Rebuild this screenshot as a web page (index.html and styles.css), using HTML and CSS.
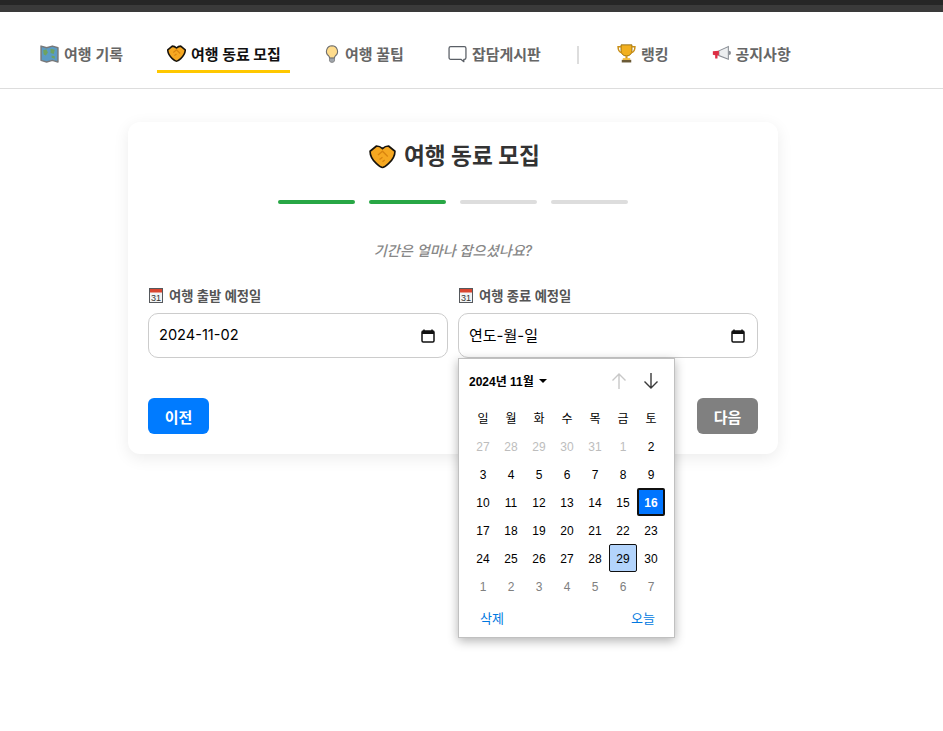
FILE: index.html
```html
<!DOCTYPE html>
<html lang="ko">
<head>
<meta charset="utf-8">
<title>여행 동료 모집</title>
<link rel="stylesheet" href="styles.css">
</head>
<body>
<div class="topbar"><div class="topbar-dark"></div><div class="topbar-light"></div></div>
<nav class="nav">
  <a class="tab">
    <svg class="ico" viewBox="0 0 18 18"><path d="M1 2l5.300 1.500L11.700 2 17 3.500V17l-5.300-1.500L6.300 17 1 15.500z" fill="#5b9bc4" stroke="#77787a" stroke-width="1.400" stroke-linejoin="round"/><path d="M3 6l3-1 1.500 3-2 3-2-1zM10 4.500l4 1-1 4-3-1zM11 11l3 .5v2.500l-3-1z" fill="#6ea35f"/></svg>
    <span>여행 기록</span>
  </a>
  <a class="tab tab-active">
    <svg class="ico" viewBox="0 0 18 18"><path d="M5 2C6.500 2 8 2.800 9 3.800 10 2.800 11.500 2 13 2l4.300 3.500c0 3.500-2.300 6.500-4.300 8.300-1.500 1.400-3 2.500-4 2.500s-2.500-1.100-4-2.500C3 12 .7 9 .7 5.500z" fill="#f6a821" stroke="#17130c" stroke-width="1.500" stroke-linejoin="round"/><path d="M6 8l3-2.500 3.500 3.500M7 11l2-1.500" fill="none" stroke="#d9850f" stroke-width="1.100"/></svg>
    <span>여행 동료 모집</span>
  </a>
  <a class="tab">
    <svg class="ico ico-bulb" viewBox="0 0 16 18"><path d="M8 .8a5.600 5.600 0 0 0-3.400 10c.7.600.9 1.200.9 2.200h5c0-1 .2-1.600.9-2.200A5.600 5.600 0 0 0 8 .8z" fill="#ffdc8c" stroke="#6f6f6f" stroke-width="1.100"/><path d="M5.500 13.300h5v2.600l-1.200 1.400H6.700l-1.200-1.400z" fill="#a0a5ab" stroke="#6f6f6f" stroke-width=".7"/></svg>
    <span>여행 꿀팁</span>
  </a>
  <a class="tab">
    <svg class="ico" viewBox="0 0 18 18"><path d="M2.500 2.500h13a1.500 1.500 0 0 1 1.500 1.500v9a1.500 1.500 0 0 1-1.500 1.500h-.500v2.200l-2.800-2.200H2.500A1.500 1.500 0 0 1 1 13V4a1.500 1.500 0 0 1 1.500-1.500z" fill="#fff" stroke="#5a5f66" stroke-width="1.200" stroke-linejoin="round"/></svg>
    <span>잡담게시판</span>
  </a>
  <div class="sep"></div>
  <a class="tab tab-rank">
    <svg class="ico" viewBox="0 0 18 18"><path d="M3.800 .8H14.200v5.500c0 3-2 5-5.200 5s-5.200-2-5.200-5z" fill="#f2b01f" stroke="#8c6a12" stroke-width=".8"/><path d="M4 2.500H1c0 3.300 1 5.300 3.800 5.800M14 2.500h3c0 3.300-1 5.300-3.800 5.800" fill="none" stroke="#c98f17" stroke-width="1.400"/><path d="M8 11h2v2.800H8z" fill="#d4981a"/><path d="M4.500 15h9v2.500h-9z" fill="#6b5a36"/><path d="M5.500 13.500h7V15h-7z" fill="#f2b01f"/></svg>
    <span>랭킹</span>
  </a>
  <a class="tab">
    <svg class="ico" viewBox="0 0 18 18"><path d="M6.500 6.500l9-4v12l-9-3.500z" fill="#eceef0" stroke="#8a8f96" stroke-width="1"/><path d="M.8 6.800l5.700-.3v4.500L5.200 11v2.800H3V10.700l-2.200-.4z" fill="#dd2e44"/><path d="M16 6.500a2 2 0 0 1 0 4" fill="#8a8f96"/></svg>
    <span>공지사항</span>
  </a>
</nav>
<main class="main">
  <section class="card">
    <h1 class="title">
      <svg class="title-ico" viewBox="0 0 18 18"><path d="M5 2C6.500 2 8 2.800 9 3.800 10 2.800 11.500 2 13 2l4.300 3.500c0 3.500-2.300 6.500-4.300 8.300-1.500 1.400-3 2.500-4 2.500s-2.500-1.100-4-2.500C3 12 .7 9 .7 5.500z" fill="#f6a821" stroke="#17130c" stroke-width="1.100" stroke-linejoin="round"/><path d="M6 8l3-2.500 3.500 3.500M7 11l2-1.500M9 12.500l1.500-1.200" fill="none" stroke="#d9850f" stroke-width=".9"/></svg>
      <span>여행 동료 모집</span>
    </h1>
    <div class="steps">
      <div class="step step-done"></div>
      <div class="step step-done"></div>
      <div class="step"></div>
      <div class="step"></div>
    </div>
    <p class="question">기간은 얼마나 잡으셨나요?</p>
    <div class="fields">
      <div class="field">
        <label class="label">
          <svg class="cal-emoji" viewBox="0 0 14 15"><rect x=".5" y=".5" width="13" height="14" fill="#f3f4f5" stroke="#55585c"/><rect x="1" y="1" width="12" height="3.500" fill="#d9452f"/><text class="cal-num" x="7" y="12.800" text-anchor="middle">31</text></svg>
          여행 출발 예정일
        </label>
        <div class="input">
          <span class="date-value">2024-11-02</span>
          <svg class="cal-btn" viewBox="0 0 14 14"><path d="M3 .5v2M11 .5v2" stroke="#111" stroke-width="1.500"/><rect x="1" y="2" width="12" height="11" rx="1.200" fill="none" stroke="#111" stroke-width="1.500"/><rect x="1" y="2" width="12" height="3" fill="#111"/></svg>
        </div>
      </div>
      <div class="field">
        <label class="label">
          <svg class="cal-emoji" viewBox="0 0 14 15"><rect x=".5" y=".5" width="13" height="14" fill="#f3f4f5" stroke="#55585c"/><rect x="1" y="1" width="12" height="3.500" fill="#d9452f"/><text class="cal-num" x="7" y="12.800" text-anchor="middle">31</text></svg>
          여행 종료 예정일
        </label>
        <div class="input">
          <span>연도-월-일</span>
          <svg class="cal-btn" viewBox="0 0 14 14"><path d="M3 .5v2M11 .5v2" stroke="#111" stroke-width="1.500"/><rect x="1" y="2" width="12" height="11" rx="1.200" fill="none" stroke="#111" stroke-width="1.500"/><rect x="1" y="2" width="12" height="3" fill="#111"/></svg>
        </div>
        <div class="picker">
          <div class="picker-head">
            <div class="picker-month">2024년 11월 <span class="caret"></span></div>
            <div class="picker-arrows">
              <svg class="arrow" viewBox="0 0 18 18"><path d="M9 17V2M2.500 8.500L9 2l6.500 6.500" fill="none" stroke="#c8c8c8" stroke-width="1.400"/></svg>
              <svg class="arrow" viewBox="0 0 18 18"><path d="M9 1v15M2.500 9.500L9 16l6.500-6.500" fill="none" stroke="#3a3a3a" stroke-width="1.400"/></svg>
            </div>
          </div>
          <div class="days">
            <div class="dow">일</div><div class="dow">월</div><div class="dow">화</div><div class="dow">수</div><div class="dow">목</div><div class="dow">금</div><div class="dow">토</div>
            <div class="day faint">27</div><div class="day faint">28</div><div class="day faint">29</div><div class="day faint">30</div><div class="day faint">31</div><div class="day faint">1</div><div class="day">2</div>
            <div class="day">3</div><div class="day">4</div><div class="day">5</div><div class="day">6</div><div class="day">7</div><div class="day">8</div><div class="day">9</div>
            <div class="day">10</div><div class="day">11</div><div class="day">12</div><div class="day">13</div><div class="day">14</div><div class="day">15</div><div class="day day-selected">16</div>
            <div class="day">17</div><div class="day">18</div><div class="day">19</div><div class="day">20</div><div class="day">21</div><div class="day">22</div><div class="day">23</div>
            <div class="day">24</div><div class="day">25</div><div class="day">26</div><div class="day">27</div><div class="day">28</div><div class="day day-today">29</div><div class="day">30</div>
            <div class="day muted">1</div><div class="day muted">2</div><div class="day muted">3</div><div class="day muted">4</div><div class="day muted">5</div><div class="day muted">6</div><div class="day muted">7</div>
          </div>
          <div class="picker-foot"><span>삭제</span><span>오늘</span></div>
        </div>
      </div>
    </div>
    <div class="actions">
      <button class="btn btn-prev">이전</button>
      <button class="btn btn-next">다음</button>
    </div>
  </section>
</main>
</body>
</html>
```
FILE: styles.css
```css
* { box-sizing: border-box; }
html, body { margin: 0; padding: 0; }
body {
  background: #fff;
  font-family: Inter, "Noto Sans CJK KR", sans-serif;
  color: #333;
  height: 731px;
  overflow: hidden;
}
.topbar-dark { height: 5px; background: #262626; }
.topbar-light { height: 7px; background: #3a3a3a; }
.nav {
  display: flex;
  align-items: flex-start;
  height: 77px;
  padding: 25px 0 0 30px;
  border-bottom: 1px solid #ddd;
}
.tab {
  display: flex;
  align-items: center;
  gap: 5px;
  height: 36px;
  padding: 0 10px;
  margin-right: 24px;
  font-size: 15px;
  font-weight: 600;
  color: #666;
  border-bottom: 3px solid transparent;
  white-space: nowrap;
}
.tab-active { color: #111; border-bottom-color: #ffc800; font-weight: 700; padding-right: 9px; }
.tab-rank { margin-right: 23px; }
.ico { width: 19px; height: 19px; flex: none; }
.ico-bulb { width: 16px; height: 18px; }
.sep { width: 2px; height: 18px; background: #ddd; margin: 9px 28px 0 2px; }
.main { display: flex; justify-content: center; padding: 33px 37px 0 0; }
.card {
  width: 650px;
  height: 332px;
  padding: 18px 20px 20px;
  background: #fff;
  border-radius: 12px;
  box-shadow: 0 4px 16px rgba(0,0,0,.08);
}
.title {
  display: flex;
  align-items: center;
  justify-content: center;
  gap: 8px;
  height: 32px;
  margin: 0;
  padding-left: 3px;
  font-size: 22.700px;
  font-weight: 700;
  color: #333;
  line-height: 28px;
}
.title-ico { width: 27px; height: 27px; }
.steps { display: flex; justify-content: center; gap: 14px; margin-top: 28px; }
.step { width: 77px; height: 4px; border-radius: 2px; background: #ddd; }
.step-done { background: #28a745; }
.question {
  margin: 37px 0 0;
  height: 20px;
  line-height: 20px;
  text-align: center;
  font-size: 14.200px;
  font-weight: 500;
  font-style: italic;
  color: #888;
}
.fields { display: flex; gap: 10px; margin-top: 24px; }
.field { position: relative; width: 300px; }
.label {
  display: flex;
  align-items: center;
  gap: 6px;
  height: 20px;
  padding-left: 1px;
  font-size: 13.300px;
  font-weight: 600;
  color: #555;
}
.cal-emoji { width: 14px; height: 15px; }
.cal-num { font: 9px "Liberation Sans", sans-serif; fill: #333; }
.input {
  display: flex;
  align-items: center;
  justify-content: space-between;
  height: 45px;
  margin-top: 8px;
  padding: 0 12px 2px 10px;
  border: 1px solid #ccc;
  border-radius: 10px;
  font-size: 15px;
  color: #000;
}
.date-value { font-size: 14.600px; }
.cal-btn { width: 14px; height: 14px; margin-top: 2px; }
.picker {
  position: absolute;
  left: 0;
  top: 73px;
  width: 217px;
  height: 280px;
  padding: 0 10px;
  background: #fff;
  border: 1px solid #c0c0c0;
  box-shadow: 0 3px 10px rgba(0,0,0,.3);
  font-family: "Liberation Sans", "Noto Sans CJK KR", sans-serif;
  color: #000;
  z-index: 2;
}
.picker-head {
  display: flex;
  align-items: center;
  justify-content: space-between;
  height: 43px;
}
.picker-month { display: flex; align-items: center; gap: 5px; font-size: 12px; font-weight: 700; }
.caret { width: 0; height: 0; border: 4px solid transparent; border-top: 4px solid #000; border-bottom: 0; }
.picker-arrows { display: flex; gap: 14px; margin-right: 4px; }
.arrow { width: 18px; height: 18px; }
.days { display: grid; grid-template-columns: repeat(7, 28px); grid-template-rows: 30px; grid-auto-rows: 28px; }
.dow, .day { display: flex; align-items: center; justify-content: center; font-size: 12px; }
.day { padding-top: 2px; }
.faint { color: #bdbdbd; }
.muted { color: #808080; }
.day-selected { background: #0075ff; color: #fff; font-weight: 700; border: 2px solid #101010; border-radius: 2px; }
.day-today { background: #b3d4fc; border: 1px solid #101010; border-radius: 2px; }
.picker-foot {
  display: flex;
  justify-content: space-between;
  padding: 8px 9px 0 11px;
  font-size: 13px;
  color: #0078e0;
}
.actions { display: flex; justify-content: space-between; margin-top: 40px; }
.btn {
  width: 61px;
  height: 36px;
  border: 0;
  border-radius: 6px;
  color: #fff;
  font-family: inherit;
  font-size: 15px;
  font-weight: 600;
}
.btn-prev { background: #007bff; }
.btn-next { background: #808080; }
```
